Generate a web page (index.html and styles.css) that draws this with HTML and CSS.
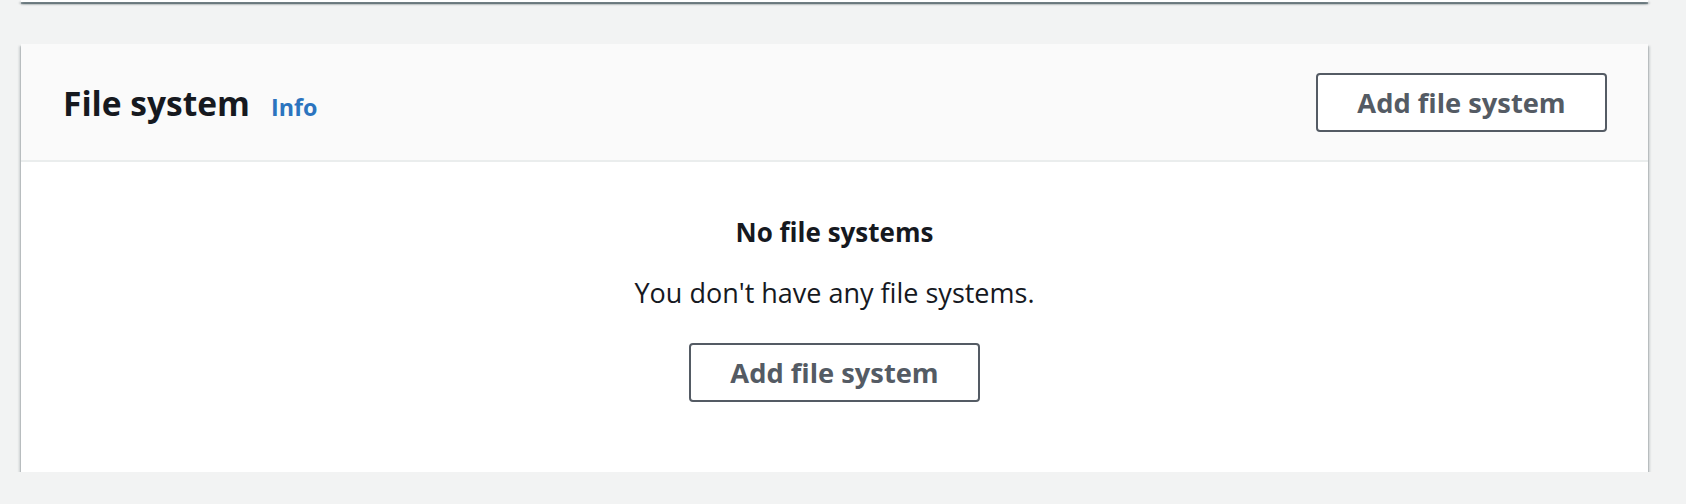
FILE: index.html
```html
<!DOCTYPE html>
<html lang="en">
<head>
<meta charset="utf-8">
<title>File system</title>
<link rel="stylesheet" href="styles.css">
</head>
<body>
<div class="page">
  <div class="card prev-card"></div>
  <section class="card">
    <header class="card-header">
      <div class="heading">
        <h2 class="title">File system</h2>
        <a class="info" href="#">Info</a>
      </div>
      <button class="btn" type="button">Add file system</button>
    </header>
    <div class="card-body">
      <div class="empty-title">No file systems</div>
      <p class="empty-text">You don't have any file systems.</p>
      <button class="btn" type="button">Add file system</button>
    </div>
  </section>
</div>
</body>
</html>
```

FILE: styles.css
```css
html, body {
  margin: 0;
  padding: 0;
}

body {
  background: #f2f3f3;
  font-family: "Open Sans", "Noto Sans", sans-serif;
  color: #16191f;
}

.page {
  display: flex;
  flex-direction: column;
  gap: 42px;
  padding: 0 38px 0 21px;
}

.card {
  background: #ffffff;
  box-shadow: 0 2px 1px 0 rgba(0, 28, 36, 0.45),
              0 3px 2px 0 rgba(0, 28, 36, 0.12),
              2px 2px 2px 0 rgba(0, 28, 36, 0.15),
              -2px 2px 2px 0 rgba(0, 28, 36, 0.15);
}

.prev-card {
  height: 2px;
}

.card-header {
  box-sizing: border-box;
  height: 118px;
  display: flex;
  align-items: center;
  justify-content: space-between;
  padding: 0 41px 0 42px;
  background: #fafafa;
  border-bottom: 2px solid #eaeded;
}

.heading {
  display: flex;
  align-items: baseline;
  gap: 21px;
  padding-top: 2px;
}

.title {
  margin: 0;
  font-size: 33.5px;
  font-weight: 700;
  color: #16191f;
}

.info {
  font-size: 23.3px;
  font-weight: 700;
  color: #2b74bf;
  text-decoration: none;
}

.btn {
  box-sizing: border-box;
  display: inline-flex;
  align-items: center;
  justify-content: center;
  width: 291px;
  height: 59px;
  padding: 0;
  background: #ffffff;
  border: 2px solid #545b64;
  border-radius: 4px;
  font-family: inherit;
  font-size: 27.3px;
  font-weight: 700;
  color: #545b64;
}

.card-body {
  display: flex;
  flex-direction: column;
  align-items: center;
  padding: 50px 0 70px;
  line-height: 40px;
}

.empty-title {
  font-size: 26px;
  font-weight: 700;
}

.empty-text {
  margin: 21px 0 30px;
  font-size: 27px;
}
```
